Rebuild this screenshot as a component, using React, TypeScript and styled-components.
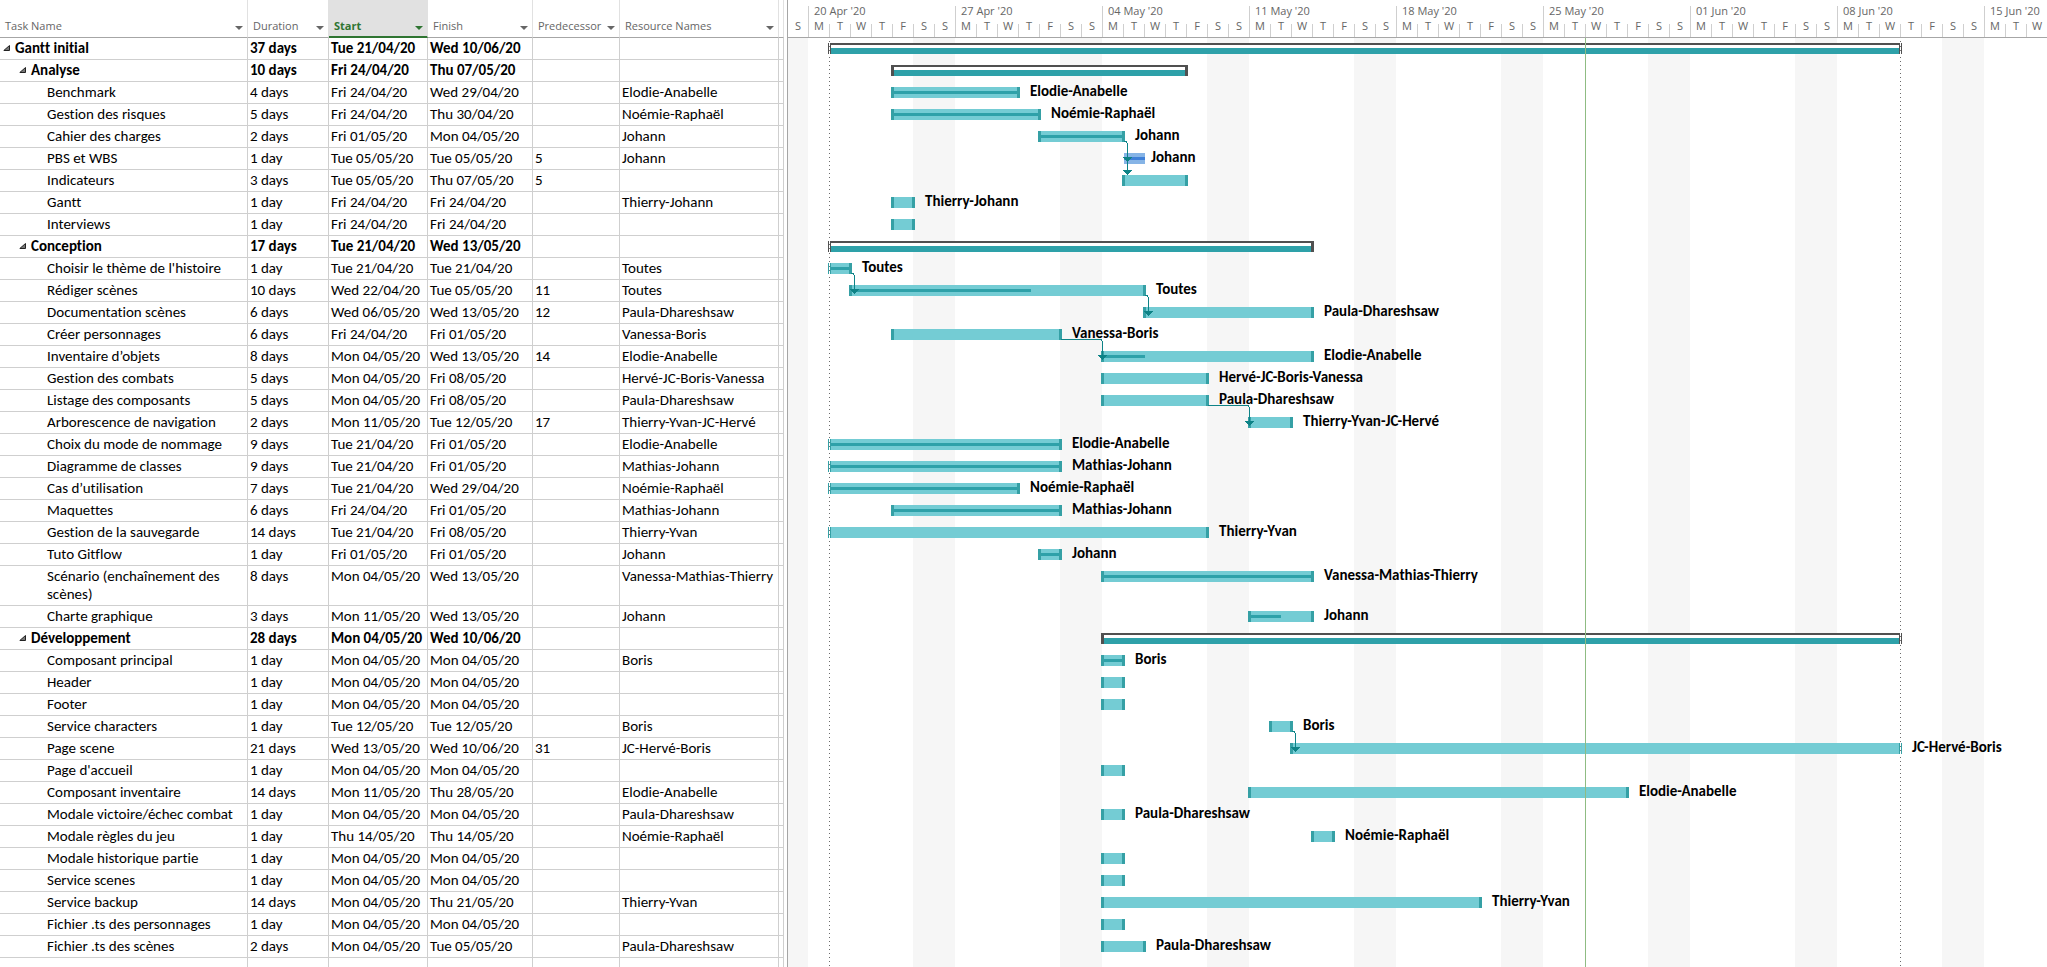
import React from 'react';
import styled, { createGlobalStyle, css } from 'styled-components';

const DAY = 21;
const DAY_COUNT = 60;
const FIRST_DAY = Date.UTC(2020, 3, 19);
const MS_PER_DAY = 86400000;
const ROW = 22;
const LINE = 18;

interface Task {
  name: string;
  level: 0 | 1 | 2;
  duration: string;
  start: string;
  finish: string;
  pred?: number;
  who?: string;
  lines?: number;
  /* 'full', or the length of the progress line in pixels */
  done?: 'full' | number;
  manual?: boolean;
}

const tasks: Task[] = [
  { name: 'Gantt initial', level: 0, duration: '37 days', start: 'Tue 21/04/20', finish: 'Wed 10/06/20' },
  { name: 'Analyse', level: 1, duration: '10 days', start: 'Fri 24/04/20', finish: 'Thu 07/05/20' },
  { name: 'Benchmark', level: 2, duration: '4 days', start: 'Fri 24/04/20', finish: 'Wed 29/04/20', who: 'Elodie-Anabelle', done: 'full' },
  { name: 'Gestion des risques', level: 2, duration: '5 days', start: 'Fri 24/04/20', finish: 'Thu 30/04/20', who: 'Noémie-Raphaël', done: 'full' },
  { name: 'Cahier des charges', level: 2, duration: '2 days', start: 'Fri 01/05/20', finish: 'Mon 04/05/20', who: 'Johann', done: 'full' },
  { name: 'PBS et WBS', level: 2, duration: '1 day', start: 'Tue 05/05/20', finish: 'Tue 05/05/20', pred: 5, who: 'Johann', done: 'full', manual: true },
  { name: 'Indicateurs', level: 2, duration: '3 days', start: 'Tue 05/05/20', finish: 'Thu 07/05/20', pred: 5 },
  { name: 'Gantt', level: 2, duration: '1 day', start: 'Fri 24/04/20', finish: 'Fri 24/04/20', who: 'Thierry-Johann' },
  { name: 'Interviews', level: 2, duration: '1 day', start: 'Fri 24/04/20', finish: 'Fri 24/04/20' },
  { name: 'Conception', level: 1, duration: '17 days', start: 'Tue 21/04/20', finish: 'Wed 13/05/20' },
  { name: "Choisir le thème de l'histoire", level: 2, duration: '1 day', start: 'Tue 21/04/20', finish: 'Tue 21/04/20', who: 'Toutes', done: 'full' },
  { name: 'Rédiger scènes', level: 2, duration: '10 days', start: 'Wed 22/04/20', finish: 'Tue 05/05/20', pred: 11, who: 'Toutes', done: 179 },
  { name: 'Documentation scènes', level: 2, duration: '6 days', start: 'Wed 06/05/20', finish: 'Wed 13/05/20', pred: 12, who: 'Paula-Dhareshsaw' },
  { name: 'Créer personnages', level: 2, duration: '6 days', start: 'Fri 24/04/20', finish: 'Fri 01/05/20', who: 'Vanessa-Boris' },
  { name: 'Inventaire d’objets', level: 2, duration: '8 days', start: 'Mon 04/05/20', finish: 'Wed 13/05/20', pred: 14, who: 'Elodie-Anabelle', done: 41 },
  { name: 'Gestion des combats', level: 2, duration: '5 days', start: 'Mon 04/05/20', finish: 'Fri 08/05/20', who: 'Hervé-JC-Boris-Vanessa' },
  { name: 'Listage des composants', level: 2, duration: '5 days', start: 'Mon 04/05/20', finish: 'Fri 08/05/20', who: 'Paula-Dhareshsaw' },
  { name: 'Arborescence de navigation', level: 2, duration: '2 days', start: 'Mon 11/05/20', finish: 'Tue 12/05/20', pred: 17, who: 'Thierry-Yvan-JC-Hervé' },
  { name: 'Choix du mode de nommage', level: 2, duration: '9 days', start: 'Tue 21/04/20', finish: 'Fri 01/05/20', who: 'Elodie-Anabelle', done: 'full' },
  { name: 'Diagramme de classes', level: 2, duration: '9 days', start: 'Tue 21/04/20', finish: 'Fri 01/05/20', who: 'Mathias-Johann', done: 'full' },
  { name: 'Cas d’utilisation', level: 2, duration: '7 days', start: 'Tue 21/04/20', finish: 'Wed 29/04/20', who: 'Noémie-Raphaël', done: 'full' },
  { name: 'Maquettes', level: 2, duration: '6 days', start: 'Fri 24/04/20', finish: 'Fri 01/05/20', who: 'Mathias-Johann', done: 'full' },
  { name: 'Gestion de la sauvegarde', level: 2, duration: '14 days', start: 'Tue 21/04/20', finish: 'Fri 08/05/20', who: 'Thierry-Yvan' },
  { name: 'Tuto Gitflow', level: 2, duration: '1 day', start: 'Fri 01/05/20', finish: 'Fri 01/05/20', who: 'Johann', done: 'full' },
  { name: 'Scénario (enchaînement des scènes)', level: 2, duration: '8 days', start: 'Mon 04/05/20', finish: 'Wed 13/05/20', who: 'Vanessa-Mathias-Thierry', done: 'full', lines: 2 },
  { name: 'Charte graphique', level: 2, duration: '3 days', start: 'Mon 11/05/20', finish: 'Wed 13/05/20', who: 'Johann', done: 30 },
  { name: 'Développement', level: 1, duration: '28 days', start: 'Mon 04/05/20', finish: 'Wed 10/06/20' },
  { name: 'Composant principal', level: 2, duration: '1 day', start: 'Mon 04/05/20', finish: 'Mon 04/05/20', who: 'Boris', done: 'full' },
  { name: 'Header', level: 2, duration: '1 day', start: 'Mon 04/05/20', finish: 'Mon 04/05/20' },
  { name: 'Footer', level: 2, duration: '1 day', start: 'Mon 04/05/20', finish: 'Mon 04/05/20' },
  { name: 'Service characters', level: 2, duration: '1 day', start: 'Tue 12/05/20', finish: 'Tue 12/05/20', who: 'Boris' },
  { name: 'Page scene', level: 2, duration: '21 days', start: 'Wed 13/05/20', finish: 'Wed 10/06/20', pred: 31, who: 'JC-Hervé-Boris' },
  { name: "Page d'accueil", level: 2, duration: '1 day', start: 'Mon 04/05/20', finish: 'Mon 04/05/20' },
  { name: 'Composant inventaire', level: 2, duration: '14 days', start: 'Mon 11/05/20', finish: 'Thu 28/05/20', who: 'Elodie-Anabelle' },
  { name: 'Modale victoire/échec combat', level: 2, duration: '1 day', start: 'Mon 04/05/20', finish: 'Mon 04/05/20', who: 'Paula-Dhareshsaw' },
  { name: 'Modale règles du jeu', level: 2, duration: '1 day', start: 'Thu 14/05/20', finish: 'Thu 14/05/20', who: 'Noémie-Raphaël' },
  { name: 'Modale historique partie', level: 2, duration: '1 day', start: 'Mon 04/05/20', finish: 'Mon 04/05/20' },
  { name: 'Service scenes', level: 2, duration: '1 day', start: 'Mon 04/05/20', finish: 'Mon 04/05/20' },
  { name: 'Service backup', level: 2, duration: '14 days', start: 'Mon 04/05/20', finish: 'Thu 21/05/20', who: 'Thierry-Yvan' },
  { name: 'Fichier .ts des personnages', level: 2, duration: '1 day', start: 'Mon 04/05/20', finish: 'Mon 04/05/20' },
  { name: 'Fichier .ts des scènes', level: 2, duration: '2 days', start: 'Mon 04/05/20', finish: 'Tue 05/05/20', who: 'Paula-Dhareshsaw' },
];

const dayIndex = (text: string) => {
  const [d, m, y] = text.slice(4).split('/').map(Number);
  return (Date.UTC(2000 + y, m - 1, d) - FIRST_DAY) / MS_PER_DAY;
};

const rowHeight = (task: Task) => ROW + ((task.lines ?? 1) - 1) * LINE;

let nextTop = 0;
const rows = tasks.map((task) => {
  const top = nextTop;
  nextTop += rowHeight(task);
  return { ...task, top, from: dayIndex(task.start), to: dayIndex(task.finish) + 1 };
});

const PROJECT_START = rows[0].from;
const PROJECT_END = rows[0].to;
const TODAY = 38;

const columns = [
  { label: 'Task Name', width: 248 },
  { label: 'Duration', width: 81 },
  { label: 'Start', width: 99, active: true },
  { label: 'Finish', width: 105 },
  { label: 'Predecessor', width: 87 },
  { label: 'Resource Names', width: 159 },
];

const weeks = [
  { label: '', days: ['S'] },
  ...["20 Apr '20", "27 Apr '20", "04 May '20", "11 May '20", "18 May '20", "25 May '20", "01 Jun '20", "08 Jun '20"].map(
    (label) => ({ label, days: ['M', 'T', 'W', 'T', 'F', 'S', 'S'] }),
  ),
  { label: "15 Jun '20", days: ['M', 'T', 'W'] },
];

const GlobalStyle = createGlobalStyle`
  body {
    margin: 0;
    background: #fff;
  }
`;

const Workspace = styled.main`
  display: flex;
  gap: 3px;
  min-height: 100vh;
  color: #000;
  font: 15px/18px Carlito, Calibri, Lato, sans-serif;
  font-variant-ligatures: none;
`;

const Sheet = styled.table`
  flex: none;
  width: 784px;
  height: 100vh;
  table-layout: fixed;
  border-collapse: separate;
  border-spacing: 0;
`;

const HeadCell = styled.th<{ $active?: boolean }>`
  box-sizing: border-box;
  height: 38px;
  padding: 0 4px 2px 5px;
  vertical-align: bottom;
  border-right: 1px solid #e1e1e1;
  border-bottom: 1px solid #a6a6a6;
  color: #666;
  font: 11px/18px 'Open Sans', sans-serif;
  ${(p) =>
    p.$active &&
    css`
      padding-bottom: 1px;
      background: #e1e1e1;
      border-bottom: 2px solid #2f7532;
      color: #2f7532;
      font-weight: 700;
    `}
`;

const HeadContent = styled.div`
  display: flex;
  align-items: center;
  justify-content: space-between;
  gap: 5px;
`;

const HeadLabel = styled.span`
  white-space: nowrap;
`;

const FilterButton = styled.button`
  flex: none;
  display: flex;
  padding: 4px 0 0;
  border: 0;
  background: none;
  color: inherit;
`;

const Cell = styled.td`
  box-sizing: border-box;
  padding: 1px 0 2px 2px;
  vertical-align: top;
  border-right: 1px solid #cfcfcf;
  border-bottom: 1px solid #cfcfcf;
  white-space: nowrap;
`;

const SheetRow = styled.tr<{ $bold: boolean; $height: number }>`
  height: ${(p) => p.$height}px;
  font-weight: ${(p) => (p.$bold ? 700 : 400)};
`;

const FillCell = styled(Cell)`
  padding: 0;
  border-bottom: 0;
`;

const NameCell = styled(Cell)<{ $level: number }>`
  padding-left: ${(p) => (p.$level === 2 ? 47 : 3 + p.$level * 16)}px;
  padding-right: 8px;
  white-space: normal;
`;

const NameContent = styled.div`
  display: flex;
  align-items: center;
  gap: 5px;
`;

const CollapseButton = styled.button`
  display: flex;
  padding: 0;
  border: 0;
  background: none;
`;

const Chart = styled.section`
  flex: 1;
  min-width: 0;
  display: flex;
  flex-direction: column;
  overflow: hidden;
`;

const Timescale = styled.header`
  box-sizing: border-box;
  display: flex;
  height: 38px;
  padding-top: 6px;
  border-left: 1px solid #a6a6a6;
  border-bottom: 1px solid #a6a6a6;
  color: #666;
  font: 11px/18px 'Open Sans', sans-serif;
`;

const Week = styled.div<{ $first: boolean }>`
  flex: none;
  display: flex;
  flex-direction: column;
  justify-content: space-between;
  box-sizing: border-box;
  margin-left: ${(p) => (p.$first ? -1 : 0)}px;
  border-left: 1px solid ${(p) => (p.$first ? 'transparent' : '#cfcfcf')};
`;

const WeekLabel = styled.div`
  height: 10px;
  padding-left: 5px;
  line-height: 10px;
  white-space: nowrap;
`;

const Days = styled.div`
  display: flex;
`;

const Day = styled.span`
  box-sizing: border-box;
  width: ${DAY}px;
  height: 13px;
  border-left: 1px solid #cfcfcf;
  line-height: 4px;
  text-align: center;

  &:first-child {
    width: ${DAY - 1}px;
    border-left: 0;
  }
`;

const ChartBody = styled.div`
  position: relative;
  flex: 1;
  box-shadow: inset 1px 0 #a6a6a6;
  background: repeating-linear-gradient(
    90deg,
    #f6f6f6 0 ${DAY}px,
    #fff ${DAY}px ${DAY * 6}px,
    #f6f6f6 ${DAY * 6}px ${DAY * 7}px
  );
`;

const Overlay = styled.svg`
  position: absolute;
  inset: 0;
  width: 100%;
  height: 100%;
  pointer-events: none;
`;

const ChartRow = styled.div<{ $height: number }>`
  display: grid;
  grid-template-columns: repeat(${DAY_COUNT}, ${DAY}px);
  align-items: start;
  box-sizing: border-box;
  height: ${(p) => p.$height}px;
`;

const crossed = css`
  content: '';
  position: absolute;
  top: 0;
  width: 1px;
  height: 11px;
  background: repeating-linear-gradient(#fff 0 3px, #7a7a7a 3px 4px);
`;

const Bar = styled.div<{ $from: number; $to: number; $kind: 'summary' | 'task' | 'manual' }>`
  position: relative;
  box-sizing: border-box;
  grid-row: 1;
  grid-column: ${(p) => p.$from + 1} / ${(p) => p.$to + 1};
  height: 11px;
  margin: 5px -2px 0 -1px;
  border: solid #35a0a5;
  border-width: 0 3px;
  background: #74ccd4;

  ${(p) =>
    p.$kind === 'summary' &&
    css`
      border-color: #505050;
      background: linear-gradient(#505050 0 2px, #fff 2px 5px, #2ea1a9 5px);
    `}
  ${(p) =>
    p.$kind === 'manual' &&
    css`
      margin: 5px -1px 0 1px;
      border-width: 0;
      background: #86b4e6;
    `}
  ${(p) => p.$from === PROJECT_START && css`&::before { ${crossed} left: -2px; }`}
  ${(p) => p.$to === PROJECT_END && css`&::after { ${crossed} right: -2px; }`}
`;

const Progress = styled.div<{ $manual?: boolean }>`
  height: 3px;
  margin-top: 4px;
  background: ${(p) => (p.$manual ? '#3f80d8' : '#2ea1a9')};
`;

const BarLabel = styled.span<{ $from: number; $manual?: boolean }>`
  position: relative;
  z-index: 2;
  grid-row: 1;
  grid-column: ${(p) => p.$from + 1} / -1;
  padding-left: ${(p) => (p.$manual ? 7 : 12)}px;
  font-weight: 700;
  white-space: nowrap;
`;

function Links() {
  return (
    <Overlay aria-hidden="true" shapeRendering="crispEdges">
      {rows.map((row) => {
        if (!row.pred) return null;
        const source = rows[row.pred - 1];
        const adjacent = source.to === row.from;
        const x = row.from * DAY + (adjacent ? 4 : 0);
        const y = source.top + 15;
        const tip = row.top + (row.name === 'Indicateurs' ? 5 : 14);
        return (
          <g key={row.name}>
            <path
              d={`M${source.to * DAY + 1} ${y + 0.5}H${x - 1}l1.5 2V${tip - 3}`}
              fill="none"
              stroke="#0e8387"
            />
            <path d={`M${x - 4} ${tip - 5}h9l-4.5 5z`} fill="#0e8387" />
          </g>
        );
      })}
      <rect x={TODAY * DAY} y="0" width="1" height="100%" fill="#8fbc83" />
    </Overlay>
  );
}

export default function App() {
  return (
    <>
      <GlobalStyle />
      <Workspace>
        <Sheet>
          <colgroup>
            {columns.map((c) => (
              <col key={c.label} width={c.width} />
            ))}
            <col width={5} />
          </colgroup>
          <thead>
            <tr>
              {columns.map((c) => (
                <HeadCell key={c.label} $active={c.active} scope="col">
                  <HeadContent>
                    <HeadLabel>{c.label}</HeadLabel>
                    <FilterButton type="button" aria-label={`Filter ${c.label}`}>
                      <svg width="8" height="4" viewBox="0 0 8 4" aria-hidden="true">
                        <path d="M0 0h8L4 4z" fill="currentColor" />
                      </svg>
                    </FilterButton>
                  </HeadContent>
                </HeadCell>
              ))}
              <HeadCell as="td" />
            </tr>
          </thead>
          <tbody>
            {rows.map((row) => (
              <SheetRow key={row.name} $bold={row.level < 2} $height={rowHeight(row)}>
                <NameCell $level={row.level}>
                  <NameContent>
                    {row.level < 2 && (
                      <CollapseButton type="button" aria-label={`Collapse ${row.name}`}>
                        <svg width="7" height="6" viewBox="0 0 7 6" aria-hidden="true">
                          <path d="M6.500 0.500V5.500H0.800z" fill="#777" stroke="#222" />
                        </svg>
                      </CollapseButton>
                    )}
                    <span>{row.name}</span>
                  </NameContent>
                </NameCell>
                <Cell>{row.duration}</Cell>
                <Cell>{row.start}</Cell>
                <Cell>{row.finish}</Cell>
                <Cell>{row.pred}</Cell>
                <Cell>{row.who}</Cell>
                <Cell />
              </SheetRow>
            ))}
            <tr>
              {columns.map((c) => (
                <FillCell key={c.label} />
              ))}
              <FillCell />
            </tr>
          </tbody>
        </Sheet>

        <Chart aria-label="Gantt chart">
          <Timescale>
            {weeks.map((week, i) => (
              <Week key={i} $first={i === 0}>
                <WeekLabel>{week.label}</WeekLabel>
                <Days>
                  {week.days.map((d, j) => (
                    <Day key={j}>{d}</Day>
                  ))}
                </Days>
              </Week>
            ))}
          </Timescale>
          <ChartBody>
            <Overlay aria-hidden="true" shapeRendering="crispEdges">
              {[PROJECT_START, PROJECT_END].map((d) => (
                <line
                  key={d}
                  x1={d * DAY + 0.5}
                  x2={d * DAY + 0.5}
                  y1="3"
                  y2="100%"
                  stroke="#6b6b6b"
                  strokeDasharray="1 3"
                />
              ))}
            </Overlay>
            {rows.map((row) => (
              <ChartRow key={row.name} $height={rowHeight(row)}>
                <Bar
                  $from={row.from}
                  $to={row.to}
                  $kind={row.level < 2 ? 'summary' : row.manual ? 'manual' : 'task'}
                >
                  {row.done && (
                    <Progress
                      $manual={row.manual}
                      style={{ width: row.done === 'full' ? '100%' : row.done }}
                    />
                  )}
                </Bar>
                {row.who && (
                  <BarLabel $from={row.to} $manual={row.manual}>
                    {row.who}
                  </BarLabel>
                )}
              </ChartRow>
            ))}
            <Links />
          </ChartBody>
        </Chart>
      </Workspace>
    </>
  );
}
